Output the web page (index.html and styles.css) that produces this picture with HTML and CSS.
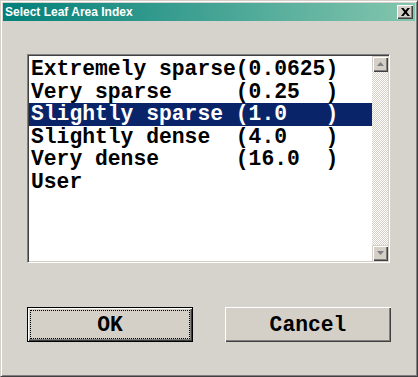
FILE: index.html
```html
<!DOCTYPE html>
<html>
<head>
<meta charset="utf-8">
<link rel="stylesheet" href="styles.css">
</head>
<body>
<div class="window">
  <div class="titlebar">
    <span class="title">Select Leaf Area Index</span>
    <button class="close" aria-label="Close">
      <svg width="9" height="8" viewBox="0 0 9 8"><path d="M0 0h2.5l2 2.4 2-2.4H9L5.8 4 9 8H6.5l-2-2.4-2 2.4H0l3.2-4z" fill="#000"/></svg>
    </button>
  </div>
  <div class="content">
    <div class="listbox">
      <ul class="items">
        <li>Extremely sparse(0.0625)</li>
        <li>Very sparse     (0.25  )</li>
        <li class="sel">Slightly sparse (1.0   )</li>
        <li>Slightly dense  (4.0   )</li>
        <li>Very dense      (16.0  )</li>
        <li>User</li>
      </ul>
      <div class="scrollbar">
        <div class="arrow"><svg width="7" height="4" viewBox="0 0 7 4"><path d="M3.5 0L7 4H0z" fill="#808080"/></svg></div>
        <div class="track"></div>
        <div class="arrow"><svg width="7" height="4" viewBox="0 0 7 4"><path d="M0 0h7L3.5 4z" fill="#808080"/></svg></div>
      </div>
    </div>
    <div class="buttons">
      <button class="btn default"><span class="focus">OK</span></button>
      <button class="btn"><span class="focus none">Cancel</span></button>
    </div>
  </div>
</div>
</body>
</html>
```
FILE: styles.css
```css
html, body {
  margin: 0;
  padding: 0;
  background: #d4d0c8;
}
.window {
  width: 418px;
  height: 377px;
  box-sizing: border-box;
  background: #d6d2cc;
  border-top: 1px solid #d4d0c8;
  border-left: 1px solid #d4d0c8;
  border-right: 1px solid #404040;
  border-bottom: 1px solid #404040;
  box-shadow: inset 1px 1px 0 #fff, inset -1px -1px 0 #808080;
  padding: 2px 2px 2px 2px;
  display: flex;
  flex-direction: column;
}
.titlebar {
  height: 18px;
  background: linear-gradient(to right, #02807a, #84c6ae);
  display: flex;
  align-items: center;
  justify-content: space-between;
  padding: 0 2px 0 2px;
}
.title {
  color: #fff;
  font-family: "Liberation Sans", Arial, sans-serif;
  font-weight: bold;
  font-size: 12px;
  letter-spacing: 0;
}
.close {
  width: 16px;
  height: 14px;
  padding: 0;
  margin: 0;
  background: #d4d0c8;
  border: none;
  box-shadow: inset 1px 1px 0 #fff, inset -1px -1px 0 #404040, inset -2px -2px 0 #808080;
  display: flex;
  align-items: center;
  justify-content: center;
}
.content {
  flex: 1;
  padding: 33px 0 0 24px;
  display: flex;
  flex-direction: column;
}
.listbox {
  width: 363px;
  height: 209px;
  box-sizing: border-box;
  border-top: 1px solid #808080;
  border-left: 1px solid #808080;
  border-right: 1px solid #fff;
  border-bottom: 1px solid #fff;
  box-shadow: inset 1px 1px 0 #404040, inset -1px -1px 0 #d4d0c8;
  padding: 2px 1px 1px 1px;
  background: #fff;
  display: flex;
}
.items {
  flex: 1;
  list-style: none;
  margin: 0;
  padding: 1px 0 0 0;
  font-family: "Liberation Mono", "Courier New", monospace;
  font-weight: bold;
  font-size: 21.33px;
}
.items li {
  height: 22.6px;
  line-height: 22.6px;
  padding-left: 2px;
  white-space: pre;
  color: #000;
}
.items li.sel {
  background: #0a246a;
  color: #fff;
}
.scrollbar {
  width: 16px;
  margin-top: -1px;
  display: flex;
  flex-direction: column;
}
.arrow {
  height: 16px;
  box-sizing: border-box;
  background: #d4d0c8;
  box-shadow: inset 1px 1px 0 #d4d0c8, inset 2px 2px 0 #fff, inset -1px -1px 0 #404040, inset -2px -2px 0 #808080;
  display: flex;
  align-items: center;
  justify-content: center;
}
.track {
  flex: 1;
  background-color: #fff;
  background-image: conic-gradient(#d4d0c8 25%, #fff 0 50%, #d4d0c8 0 75%, #fff 0);
  background-size: 2px 2px;
}
.buttons {
  display: flex;
  gap: 32px;
  margin-top: 44px;
}
.btn {
  width: 166px;
  height: 35px;
  padding: 0;
  margin: 0;
  background: #d4d0c8;
  border: none;
  box-shadow: inset 1px 1px 0 #fff, inset -1px -1px 0 #404040, inset -2px -2px 0 #808080;
  font-family: "Liberation Mono", "Courier New", monospace;
  font-weight: bold;
  font-size: 21.33px;
  color: #000;
  display: flex;
  align-items: stretch;
  justify-content: stretch;
}
.btn.default {
  box-shadow: inset 0 0 0 1px #000, inset 2px 2px 0 #fff, inset -2px -2px 0 #404040, inset -3px -3px 0 #808080;
}
.focus {
  flex: 1;
  margin: 4px;
  display: flex;
  align-items: center;
  justify-content: center;
  outline: 1px dotted #000;
  outline-offset: 0;
}
.focus.none {
  outline: none;
}
```
